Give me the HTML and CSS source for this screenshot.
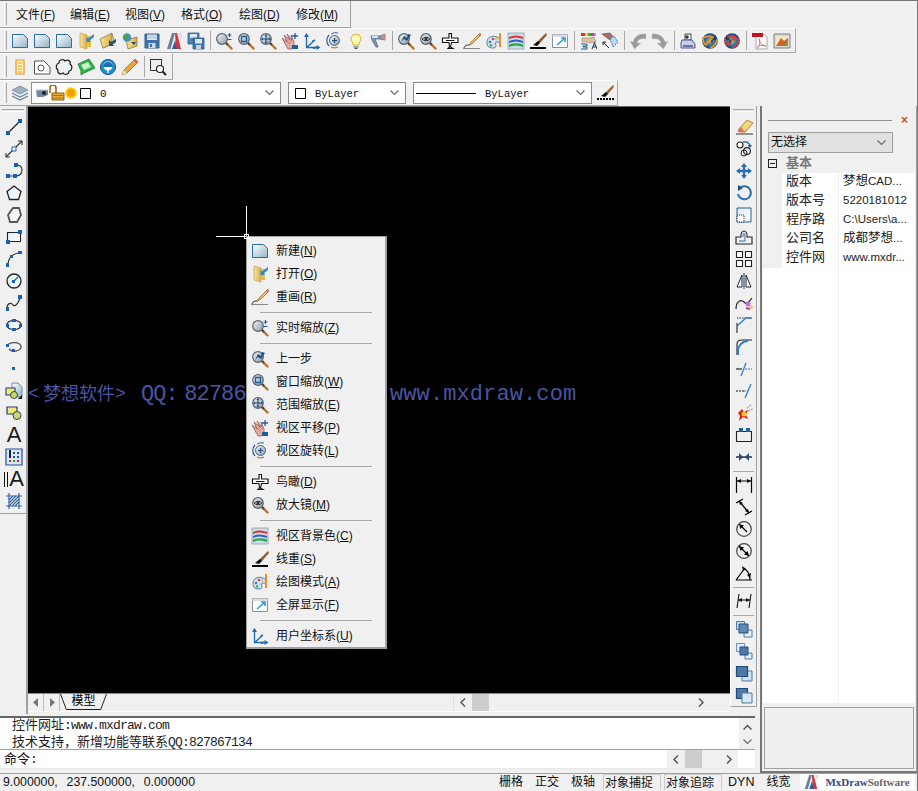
FILE: index.html
```html
<!DOCTYPE html>
<html lang="zh">
<head>
<meta charset="utf-8">
<title>MxDraw</title>
<link rel="stylesheet" href="styles.css">
</head>
<body>
<svg class="sprite" width="0" height="0" aria-hidden="true">
<defs>
<linearGradient id="gp" x1="0" y1="0" x2="1" y2="1"><stop offset="0" stop-color="#fff"/><stop offset="1" stop-color="#8fb4c8"/></linearGradient>
<linearGradient id="gl" x1="0" y1="0" x2="1" y2="1"><stop offset="0" stop-color="#f2f6f8"/><stop offset="1" stop-color="#8d9aa8"/></linearGradient>
<linearGradient id="gb" x1="0" y1="0" x2="1" y2="1"><stop offset="0" stop-color="#dfeaf4"/><stop offset="1" stop-color="#fff"/></linearGradient>
<linearGradient id="gf" x1="0" y1="0" x2="1" y2="0"><stop offset="0" stop-color="#f7e6a0"/><stop offset="1" stop-color="#d9ae48"/></linearGradient>
<radialGradient id="gg"><stop offset="0" stop-color="#f0b030"/><stop offset=".55" stop-color="#2a78b8"/><stop offset="1" stop-color="#143f70"/></radialGradient>

<symbol id="new" viewBox="-1 -1 18 18"><path d="M.5 1.5H11.5L15.5 5.5V14.5H.5Z" fill="url(#gp)" stroke="#2c6ca6"/></symbol>
<symbol id="open" viewBox="-1 -1 18 18"><path d="M2 0L9 2V16L2 14Z" fill="url(#gf)" stroke="#c9a040" stroke-width=".7"/><path d="M9 3H13V14H9Z" fill="#e3bd55"/><path d="M16 1L10 5.5 8.5 4V9H13L11.5 7.5 16 4Z" fill="#2b87d6"/></symbol>
<symbol id="open2" viewBox="-1 -1 18 18"><path d="M0 6L12 0V11L3 15Z" fill="url(#gf)" stroke="#8d7a3c" stroke-width=".8"/><path d="M3 15L15 10 12 1" fill="none" stroke="#a8904a"/><path d="M16 6L11 9 9 7V13H14L12.5 11 16 9Z" fill="#24506f"/></symbol>
<symbol id="openw" viewBox="-1 -1 18 18"><path d="M4 7L15 4V13L6 16Z" fill="url(#gf)" stroke="#8d7a3c" stroke-width=".8"/><circle cx="5" cy="4.5" r="4.2" fill="#3f8fd0"/><path d="M2 2L6 1 7 4 4 7 2 5ZM7 5L9 6 7 8Z" fill="#57a04a"/><path d="M9 9H14L12 12Z" fill="#24506f"/></symbol>
<symbol id="save" viewBox="-1 -1 18 18"><path d="M1 1H15V15H1Z" fill="#3d72aa" stroke="#33608f"/><path d="M3 1.5H13V7H3Z" fill="#dbe7f0"/><path d="M3 3H13M3 5H13" stroke="#9ab" stroke-width=".6"/><path d="M4.5 10H11.5V15H4.5Z" fill="#c8d6e2"/><path d="M6 11H8V14H6Z" fill="#3d72aa"/></symbol>
<symbol id="mx" viewBox="-1 -1 18 18"><path d="M1 16L6 0H9L4.5 16Z" fill="#6f7d96"/><path d="M9 0H11L15 16H10Z" fill="#d8343c"/><path d="M6 16L9 7 11 16Z" fill="#2d5fa8"/><path d="M12 0H16V6Z" fill="#d8dde6"/></symbol>
<symbol id="saveall" viewBox="-1 -1 18 18"><path d="M0 0H11V11H0Z" fill="#4c82b6" stroke="#33608f" stroke-width=".8"/><path d="M2 1H9V5H2Z" fill="#dbe7f0"/><path d="M5 5H16V16H5Z" fill="#3d72aa" stroke="#33608f" stroke-width=".8"/><path d="M7 6H14V10.500H7Z" fill="#dbe7f0"/><path d="M8 12H13V16H8Z" fill="#c8d6e2"/></symbol>

<symbol id="lens" viewBox="-1 -1 18 18"><circle cx="6" cy="6" r="5.300" fill="url(#gl)" stroke="#56636f" stroke-width="1.200"/><path d="M10 10L15.500 15.500" stroke="#b07433" stroke-width="2.400" stroke-linecap="round"/><path d="M10 10L12 12" stroke="#444" stroke-width="2"/></symbol>
<symbol id="zrt" viewBox="-1 -1 18 18"><use href="#lens" x="-1" y="-1" width="18" height="18"/><path d="M13.500 0V4M11.500 2H15.500M11.500 6.500H15.500" stroke="#1f5d99" stroke-width="1.100" fill="none"/></symbol>
<symbol id="zwin" viewBox="-1 -1 18 18"><use href="#lens" x="-1" y="-1" width="18" height="18"/><path d="M3.500 3.500H8.500V8.500H3.500Z" fill="none" stroke="#1f5d99" stroke-width="1.300"/></symbol>
<symbol id="zext" viewBox="-1 -1 18 18"><use href="#lens" x="-1" y="-1" width="18" height="18"/><path d="M6 2V10M2 6H10" stroke="#1f4f80" stroke-width="1.100"/><path d="M6 1L7.500 3H4.500ZM6 11L7.500 9H4.500ZM1 6L3 4.500V7.500ZM11 6L9 4.500V7.500Z" fill="#1f4f80"/></symbol>
<symbol id="pan" viewBox="-1 -1 18 18"><path d="M0 5L5 9 2 2 8 7 5 1 10 7 9 2 12 9V13L10 16H6Z" fill="#e6a9a0" stroke="#8f5a5a" stroke-width=".8"/><path d="M3 6L8 11M5 4L10 9" stroke="#a86868" stroke-width=".7"/><path d="M10 12H16V16H10Z" fill="#1f5d99"/><path d="M13 0V6M10 3H16" stroke="#1f5d99" stroke-width="1.300"/></symbol>
<symbol id="ucs" viewBox="-1 -1 18 18"><path d="M2.500 1V14.500H15M2.500 14.500L11 7" fill="none" stroke="#2469ac" stroke-width="1.300"/><path d="M2.500 0L5 4H0ZM16.500 14.500L12.500 17V12Z" fill="#2469ac"/><path d="M9 15.500H11V13.500M11 7L8 8" stroke="#2469ac" fill="none"/></symbol>
<symbol id="orbit" viewBox="-1 -1 18 18"><circle cx="8.500" cy="7.500" r="5" fill="url(#gl)" stroke="#56636f"/><path d="M8.500 5V10M6 7.500H11" stroke="#1f4f80" stroke-width="1.200"/><path d="M3 2A8 8 0 0 0 3 13" fill="none" stroke="#2469ac" stroke-width="1.300"/><path d="M5 14A8 8 0 0 0 12 14" fill="none" stroke="#b5843f" stroke-width="1.300"/><path d="M5 1A8 8 0 0 1 12 0" fill="none" stroke="#2469ac"/></symbol>
<symbol id="bulb" viewBox="-1 -1 18 18"><path d="M8 1A5 5 0 0 1 11 10V12H5V10A5 5 0 0 1 8 1Z" fill="#fff8b8" stroke="#d8b020"/><path d="M5.500 13H10.500V15H5.500Z" fill="#9aa4b0"/><path d="M6.500 15.500H9.500" stroke="#556"/></symbol>
<symbol id="dryer" viewBox="-1 -1 18 18"><path d="M1 3H10L15 1V7L10 6H5L8 14H6L2 7Z" fill="#7f96b4" stroke="#4f647f" stroke-width=".8"/><path d="M2 3H8V5H2Z" fill="#d8e2ee"/><path d="M12 2L15 1V7L12 6Z" fill="#c78f86"/></symbol>
<symbol id="zprev" viewBox="-1 -1 18 18"><use href="#lens" x="-1" y="-1" width="18" height="18"/><path d="M3 9L6 3 9 5 10 1 13 2 9 8 6 6Z" fill="#1f4f80"/></symbol>
<symbol id="zeye" viewBox="-1 -1 18 18"><use href="#lens" x="-1" y="-1" width="18" height="18"/><path d="M2 6Q6 2.500 10 6Q6 9.500 2 6Z" fill="#fff" stroke="#333"/><circle cx="6" cy="6" r="1.700" fill="#333"/></symbol>
<symbol id="plane" viewBox="-1 -1 18 18"><path d="M7 .5H9.500V5H16V9.500H9.500L8.500 14 11 15.500H6L7.500 14 7 9.500H.5V5H7Z" fill="#fff" stroke="#111" stroke-width="1.100"/><path d="M4 7.500H12.500" stroke="#111"/></symbol>
<symbol id="redraw" viewBox="-1 -1 18 18"><path d="M16 0L7 9 5.500 12 8.500 10.500 17 2Z" fill="#e8c070" stroke="#aa6c25" stroke-width=".8"/><path d="M14 1L16 3" stroke="#c44"/><path d="M5.500 12C3 12 0 12 0 16" fill="none" stroke="#222"/><path d="M1 15.500H16" stroke="#888"/></symbol>
<symbol id="palette" viewBox="-1 -1 18 18"><path d="M1 9C1 4 7 2 11 4 16 6 14 10 11 9 9 9 9 11 10 12 11 15 6 16 3 14 1 13 1 11 1 9Z" fill="#cfe0ee" stroke="#5a7fa8"/><circle cx="4" cy="9" r="1.300" fill="#3a7fc8"/><circle cx="7" cy="6" r="1.300" fill="#e04848"/><circle cx="5" cy="12.500" r="1.300" fill="#4fa850"/><circle cx="10" cy="6" r="1.200" fill="#e8c040"/><path d="M14 0V14" stroke="#e89028" stroke-width="2"/></symbol>
<symbol id="bgc" viewBox="-1 -1 18 18"><path d="M0 0H16V16H0Z" fill="#cfdbe6" stroke="#8fa0b0" stroke-width=".8"/><path d="M1 4Q8 1 15 4V6Q8 3 1 6Z" fill="#d8342c"/><path d="M1 8Q8 5 15 8V10Q8 7 1 10Z" fill="#2c60c8"/><path d="M1 11.500Q8 9 15 11.500V14Q8 11 1 14Z" fill="#2ea84a"/></symbol>
<symbol id="lw" viewBox="-1 -1 18 18"><path d="M16 0L8 8 5 12 10 10 17 2Z" fill="#8a5a30"/><path d="M3 12L8 8 10 10 7 13Z" fill="#111"/><path d="M0 14H16V16H0Z" fill="#000"/></symbol>
<symbol id="full" viewBox="-1 -1 18 18"><path d="M.5 1.500H15.500V14.500H.5Z" fill="#fff" stroke="#8a9097"/><path d="M.5 1.500H15.500V4H.5Z" fill="#d8dde2"/><path d="M5 12L13 5M9 5H13V9" fill="none" stroke="#2c9ae0" stroke-width="1.600"/></symbol>
<symbol id="ca" viewBox="-1 -1 18 18"><path d="M1 0H16V3H1Z" fill="#c8c"/><path d="M1 0H5V3H1Z" fill="#e03030"/><path d="M5 0H8V3H5Z" fill="#f0d020"/><path d="M8 0H11V3H8Z" fill="#30b030"/><path d="M11 0H14V3H11Z" fill="#d030c0"/><path d="M2 5H9L14 4 16 9 10 10 7 9H2Z" fill="#d8c890" stroke="#708" stroke-width=".3"/><path d="M12 16L14.500 10 17 16M13 14H16" fill="none" stroke="#345" stroke-width="1.100"/><path d="M1 11H7V13H3V14H7V16H1" fill="none" stroke="#1f5d99"/></symbol>
<symbol id="pick" viewBox="-1 -1 18 18"><path d="M0 1L8 0 12 5 8 7Z" fill="#a86e68" stroke="#6b4a48" stroke-width=".7"/><path d="M8 6L12 3 16 9 11 14Z" fill="#b8d8f0" stroke="#3a7ab8" stroke-dasharray="2 1"/><path d="M1 9L7 15M1 9H4M1 9V12" fill="none" stroke="#222"/></symbol>
<symbol id="undo" viewBox="-1 -1 18 18"><path d="M16 1V6C10 5 8 7 7 10L11 10 4.500 16 0 8 3 9C4 4 9 0 16 1Z" fill="#9a9a9a" stroke="#c8c8c8" stroke-width=".5"/></symbol>
<symbol id="redo" viewBox="-1 -1 18 18"><path d="M0 1V6C6 5 8 7 9 10L5 10 11.500 16 16 8 13 9C12 4 7 0 0 1Z" fill="#9a9a9a" stroke="#c8c8c8" stroke-width=".5"/></symbol>
<symbol id="print" viewBox="-1 -1 18 18"><path d="M5 1H11V7H5Z" fill="#fff" stroke="#444"/><path d="M2 7H12L15 11V15H1V10Z" fill="#c9cde6" stroke="#4f5690"/><path d="M3 13H13" stroke="#4f5690" stroke-width="1.500"/><circle cx="7" cy="4" r="1.800" fill="#333"/></symbol>
<symbol id="globe1" viewBox="-1 -1 18 18"><circle cx="8" cy="8" r="7.800" fill="url(#gg)"/><path d="M1 5Q8 1 13 6 7 5 4 12 1 10 1 5ZM8 15Q14 13 15 7" fill="none" stroke="#e89828" stroke-width="1.700"/><path d="M9 8L14 2V7H11L10 11Z" fill="#173e70"/></symbol>
<symbol id="globe2" viewBox="-1 -1 18 18"><circle cx="8" cy="8" r="7.800" fill="url(#gg)"/><path d="M1 5Q8 1 13 6 7 5 4 12 1 10 1 5ZM8 15Q14 13 15 7" fill="none" stroke="#d64038" stroke-width="1.700"/><path d="M7 8L2 2V7H5L6 11Z" fill="#173e70"/></symbol>
<symbol id="pdf" viewBox="-1 -1 18 18"><path d="M4 1H12L15 4V16H4Z" fill="#fff" stroke="#a8a8a8"/><path d="M0 0H11V4H0Z" fill="#c8101c"/><path d="M7 6C8 11 11 13 14 13 10 11 6 13 5 15 7 14 9 8 7 6Z" fill="none" stroke="#ee6a70"/></symbol>
<symbol id="img" viewBox="-1 -1 18 18"><path d="M0 1H16V15H0Z" fill="#d8d8d8" stroke="#808080"/><path d="M2 3H14V13H2Z" fill="#f0e8c8"/><path d="M2 13L7 5 10 8 14 5V13Z" fill="#d86028"/><path d="M9 13L14 7V13Z" fill="#7a9a30"/></symbol>

<symbol id="ruler" viewBox="-1 -1 18 18"><path d="M4 1H12V15H4Z" fill="#fff3c8" stroke="#e89818" stroke-width="1.200"/><path d="M6 4H10M6 7H10M6 10H10M6 13H10" stroke="#e89818"/></symbol>
<symbol id="shape" viewBox="-1 -1 18 18"><path d="M.5 2H10L16 8V15H.5Z" fill="#fff" stroke="#555"/><circle cx="7" cy="9" r="3" fill="none" stroke="#555"/></symbol>
<symbol id="cloud" viewBox="-1 -1 18 18"><path d="M3 4C3 0 8 0 9 2 12 0 15 2 14 5 17 7 16 12 13 12 13 16 8 16 7 14 4 16 1 14 2 11 -1 9 0 5 3 4Z" fill="#eef1f4" stroke="#222" stroke-width="1.200"/></symbol>
<symbol id="bubble" viewBox="-1 -1 18 18"><path d="M0 5L11 0 17 9 6 14 3 16 3 12Z" fill="#2fb24a" stroke="#1f7a34" stroke-width=".8"/><path d="M3 6L10 3 13 8 6 11Z" fill="#c8f0c8"/></symbol>
<symbol id="bluec" viewBox="-1 -1 18 18"><circle cx="8" cy="8" r="7.600" fill="#1d8fd0" stroke="#1d5f90"/><circle cx="8" cy="7" r="4.600" fill="#e8f2fa"/><path d="M3 8A5 5 0 0 1 13 8Z" fill="#1d6fb0"/><path d="M8 8V14" stroke="#fff" stroke-width="1.400"/></symbol>
<symbol id="pencil" viewBox="-1 -1 18 18"><path d="M13 0L16 3 5 14 0 16 2 11Z" fill="#eaa63a" stroke="#8c6a2c" stroke-width=".8"/><path d="M13 0L16 3 14.500 4.500 11.500 1.500Z" fill="#d86a5a"/><path d="M2 11L5 14 0 16Z" fill="#ecdcc0"/></symbol>
<symbol id="zsel" viewBox="-1 -1 18 18"><path d="M.5 .5H11.500V11.500H.5Z" fill="none" stroke="#333"/><path d="M.5 9V.5H11.500V4" fill="none" stroke="#333"/><circle cx="10" cy="10" r="3.500" fill="#fff" stroke="#222" stroke-width="1.200"/><path d="M12.500 12.500L16 16" stroke="#222" stroke-width="2"/></symbol>

<symbol id="layers" viewBox="-1 -1 18 18"><path d="M8 1L16 5 8 9 0 5Z" fill="#9fb0c0" stroke="#6a7f93" stroke-width=".7"/><path d="M0 8L8 12 16 8M0 11L8 15 16 11" fill="none" stroke="#6a7f93" stroke-width="1.300"/></symbol>
<symbol id="eye" viewBox="0 0 12 8"><path d="M0 1H12V6L7 8H1Z" fill="#6f87a0"/><circle cx="8" cy="4" r="2" fill="#222"/><path d="M0 1H12" stroke="#b8c8d8"/></symbol>
<symbol id="lock" viewBox="0 0 16 16"><path d="M1 8V3A3 3 0 0 1 7 3V8" fill="none" stroke="#a06a10" stroke-width="1.600"/><path d="M3 8H15V15H3Z" fill="#e8b038" stroke="#8c5c10"/><path d="M3 10.500H15M3 13H15" stroke="#a87818"/></symbol>
<symbol id="sun" viewBox="0 0 12 12"><circle cx="6" cy="6" r="5.800" fill="#ffc808"/><circle cx="6" cy="6" r="3.800" fill="#f0a000"/></symbol>
<symbol id="square" viewBox="0 0 11 11"><path d="M.5 .5H10.500V10.500H.5Z" fill="#fff" stroke="#000"/></symbol>
<symbol id="brushsm" viewBox="-1 -1 18 18"><path d="M16 0L9 7 6 11 11 9 17 2Z" fill="#9a6a38"/><path d="M4 11L9 7 11 9 8 12Z" fill="#111"/><path d="M0 14H17" stroke="#000" stroke-width="2" stroke-dasharray="2 1"/></symbol>
<symbol id="dn" viewBox="0 0 9 6"><path d="M.5 .5L4.500 4.500 8.500 .5" fill="none" stroke="#666" stroke-width="1.100"/></symbol>
<symbol id="up" viewBox="0 0 9 6"><path d="M.5 5.500L4.500 1.500 8.500 5.500" fill="none" stroke="#555" stroke-width="1.500"/></symbol>
<symbol id="lf" viewBox="0 0 6 9"><path d="M5 .5L1 4.500 5 8.500" fill="none" stroke="#555" stroke-width="1.500"/></symbol>
<symbol id="rt" viewBox="0 0 6 9"><path d="M1 .5L5 4.500 1 8.500" fill="none" stroke="#555" stroke-width="1.500"/></symbol>
<symbol id="tl" viewBox="0 0 6 9"><path d="M5 0V9L0 4.500Z" fill="#777"/></symbol>
<symbol id="tr" viewBox="0 0 6 9"><path d="M1 0V9L6 4.500Z" fill="#777"/></symbol>
<symbol id="sl" viewBox="0 0 7 16"><path d="M.5 0L6.500 16" stroke="#222" fill="none"/></symbol>
<symbol id="sr" viewBox="0 0 7 16"><path d="M6.500 0L.5 16" stroke="#222" fill="none"/></symbol>

<symbol id="d-line" viewBox="-1 -1 18 18"><path d="M2 14L14 2" stroke="#222" stroke-width="1.200"/><path d="M0 12H4V16H0ZM12 0H16V4H12Z" fill="#1660b8"/></symbol>
<symbol id="d-xline" viewBox="-1 -1 18 18"><path d="M0 16L16 0" stroke="#333" stroke-width="1.100"/><path d="M0 16V12M0 16H4M16 0V4M16 0H12" fill="none" stroke="#333" stroke-width="1.100"/><path d="M6 8H10V12H6Z" transform="translate(0 -2)" fill="#fff" stroke="#1660b8"/></symbol>
<symbol id="d-pl" viewBox="-1 -1 18 18"><path d="M2 13H9C13 13 16 11 16 7S13 2 10 2" fill="none" stroke="#333" stroke-width="1.100"/><path d="M0 11H4V15H0ZM7 11H11V15H7ZM8 0H12V4H8Z" fill="#1660b8"/></symbol>
<symbol id="d-poly" viewBox="-1 -1 18 18"><path d="M8 1L15 6.500 12.500 14.500H3.500L1 6.500Z" fill="url(#gb)" stroke="#222" stroke-width="1.300"/></symbol>
<symbol id="d-poly2" viewBox="-1 -1 18 18"><path d="M7 1H13L15 8 11 15H4L2 8Z" fill="url(#gb)" stroke="#555" stroke-width="1.800"/></symbol>
<symbol id="d-rect" viewBox="-1 -1 18 18"><path d="M1.500 3.500H14.500V12.500H1.500Z" fill="url(#gb)" stroke="#222" stroke-width="1.100"/><path d="M0 11H4V15H0ZM12 1H16V5H12Z" fill="#1660b8"/></symbol>
<symbol id="d-arc" viewBox="-1 -1 18 18"><path d="M2 14C2 7 7 2 14 2" fill="none" stroke="#333" stroke-width="1.200"/><path d="M0 12H3V16H0ZM12 0H16V3H12ZM4 4H7V7H4Z" fill="#1660b8"/></symbol>
<symbol id="d-circle" viewBox="-1 -1 18 18"><circle cx="8" cy="8" r="7" fill="url(#gb)" stroke="#222" stroke-width="1.300"/><path d="M8 8L12 4" stroke="#1660b8" stroke-width="1.300"/><path d="M6 7H9V10H6Z" fill="#1660b8"/></symbol>
<symbol id="d-spl" viewBox="-1 -1 18 18"><path d="M1 14C1 8 5 7 7 10 9 12 12 9 14 3" fill="none" stroke="#333" stroke-width="1.200"/><path d="M0 12H3V16H0ZM12 0H16V4H12Z" fill="#1660b8"/></symbol>
<symbol id="d-ell" viewBox="-1 -1 18 18"><ellipse cx="8" cy="8" rx="7.300" ry="4.500" fill="url(#gb)" stroke="#222" stroke-width="1.200"/><path d="M6 2H10V5H6ZM6 11H10V14H6Z" fill="#1660b8"/><path d="M0 7H3V10H0ZM13 7H16V10H13Z" fill="#1660b8"/></symbol>
<symbol id="d-ella" viewBox="-1 -1 18 18"><path d="M1 7C3 3 13 2 15 7 16 12 6 14 3 10" fill="url(#gb)" stroke="#555" stroke-width="1.400"/><path d="M0 5H3V8H0ZM6 10H9V13H6Z" fill="#1660b8"/></symbol>
<symbol id="d-pt" viewBox="-1 -1 18 18"><path d="M6 6H9V9H6Z" fill="#1660b8"/></symbol>
<symbol id="d-ins" viewBox="-1 -1 18 18"><path d="M6 0H12L16 4V14H6Z" fill="url(#gp)" stroke="#6a8aa8"/><path d="M0 5H9V12H0Z" fill="#f4e87a" stroke="#1f3f70" stroke-width="1.100"/><circle cx="8" cy="12" r="3.500" fill="#c8d870" stroke="#444"/><path d="M12 16L16 12V16Z" fill="#111"/></symbol>
<symbol id="d-blk" viewBox="-1 -1 18 18"><path d="M1 2H11V9H1Z" fill="#f4e87a" stroke="#1f3f70" stroke-width="1.200"/><circle cx="11" cy="10.500" r="4" fill="#c8d870" stroke="#444"/></symbol>
<symbol id="d-table" viewBox="-1 -1 18 18"><path d="M0 0H16V16H0Z" fill="#dce6f4" stroke="#24509a" stroke-width="1.200"/><path d="M4 1V9" stroke="#222" stroke-width="2"/><path d="M7 3H9V5H7ZM11 3H13V5H11ZM7 7H9V9H7ZM11 7H13V9H11Z" fill="#1b4e9e"/><path d="M3 11H5V13H3Z" fill="#d02020"/><path d="M7 11H9V13H7Z" fill="#20a020"/><path d="M11 11H13V13H11Z" fill="#d02020"/></symbol>
<symbol id="d-hatch" viewBox="-1 -1 18 18"><path d="M3 3H13V13H3Z" fill="#fff"/><path d="M3 7L7 3M3 10L10 3M3 13L13 3M6 13L13 6M9 13L13 9" stroke="#3a5f8f" stroke-width="1.100"/><path d="M0 3H16M0 13H16M3 0V16M13 0V16" stroke="#2e6aa8" stroke-width="1.200"/></symbol>

<symbol id="m-erase" viewBox="-1 -1 18 18"><path d="M11 1L17 4 9 13H3L2 11Z" fill="#f0d880" stroke="#a86a20" stroke-width=".8"/><path d="M2 11L5 8 9 13H3Z" fill="#e87060"/><path d="M0 15H17" stroke="#333"/></symbol>
<symbol id="m-copy" viewBox="-1 -1 18 18"><circle cx="4" cy="4" r="3" fill="#fff" stroke="#222" stroke-width="1.100"/><circle cx="11" cy="10" r="3.400" fill="#dfe8f2" stroke="#222" stroke-width="1.100"/><circle cx="8" cy="12" r="3" fill="none" stroke="#222"/><path d="M7 1Q13 0 14 5" fill="none" stroke="#1f5d99" stroke-width="1.400"/><path d="M11.500 4H16L14 7Z" fill="#1f5d99"/></symbol>
<symbol id="m-move" viewBox="-1 -1 18 18"><path d="M8 2V14M2 8H14" stroke="#2b6fb0" stroke-width="2.400"/><path d="M8 0L11 4H5ZM8 16L11 12H5ZM0 8L4 5V11ZM16 8L12 5V11Z" fill="#2b6fb0"/></symbol>
<symbol id="m-rot" viewBox="-1 -1 18 18"><path d="M4 3A6.500 6.500 0 1 1 2 9" fill="none" stroke="#2b6fb0" stroke-width="2"/><path d="M2 0L7 3 2 6Z" fill="#1f4f80"/></symbol>
<symbol id="m-scale" viewBox="-1 -1 18 18"><path d="M1 1H15V15H1Z" fill="url(#gb)" stroke="#2a5f96"/><path d="M1 8H8V15H1Z" fill="#fff" stroke="#222" stroke-dasharray="1 1"/></symbol>
<symbol id="m-offset" viewBox="-1 -1 18 18"><path d="M5 8C4 0 12 0 11 8H16V15H0V8Z" fill="none" stroke="#222" stroke-width="1.100"/><path d="M7 8C7 3 9 3 9 8V12H3" fill="none" stroke="#2b6fb0"/></symbol>
<symbol id="m-array" viewBox="-1 -1 18 18"><path d="M.5 .5H6.500V6.500H.5ZM9.500 .5H15.500V6.500H9.500ZM.5 9.500H6.500V15.500H.5ZM9.500 9.500H15.500V15.500H9.500Z" fill="#fff" stroke="#222" stroke-width="1.100"/></symbol>
<symbol id="m-mirror" viewBox="-1 -1 18 18"><path d="M8 0V16" stroke="#2b6fb0" stroke-width="1.300"/><path d="M6 2L1 14H6ZM10 2L15 14H10Z" fill="#fff" stroke="#222"/></symbol>
<symbol id="m-curve" viewBox="-1 -1 18 18"><path d="M0 14C0 6 5 4 8 7S12 8 16 3" fill="none" stroke="#222" stroke-width="1.200"/><circle cx="12" cy="9" r="2.500" fill="#c070e0"/><circle cx="15" cy="12" r="2" fill="#f0d060"/><path d="M10 13L14 14" stroke="#b040c0" stroke-width="2"/></symbol>
<symbol id="m-chamf" viewBox="-1 -1 18 18"><path d="M1 16V6" stroke="#222" stroke-width="1.100"/><path d="M1 1H16" stroke="#222" stroke-dasharray="1.500 1"/><path d="M1 9L10 1H16" fill="none" stroke="#2b7fd0" stroke-width="1.400"/></symbol>
<symbol id="m-fill" viewBox="-1 -1 18 18"><path d="M1 16V5C1 2 3 1 6 1H16" fill="none" stroke="#222" stroke-width="1.100"/><path d="M2 16V12C2 7 6 2 12 2" fill="none" stroke="#2b7fd0" stroke-width="2"/></symbol>
<symbol id="m-trim" viewBox="-1 -1 18 18"><path d="M0 8H6" stroke="#111" stroke-width="1.100"/><path d="M9 8H16" stroke="#2b7fd0" stroke-dasharray="2 1"/><path d="M5 15L10 2" stroke="#2b7fd0" stroke-width="1.300"/></symbol>
<symbol id="m-ext" viewBox="-1 -1 18 18"><path d="M0 8H8" stroke="#111" stroke-dasharray="2 1"/><path d="M8 8H12" stroke="#2b7fd0" stroke-dasharray="2 1"/><path d="M9 15L15 1" stroke="#2b7fd0" stroke-width="1.300"/></symbol>
<symbol id="m-expl" viewBox="-1 -1 18 18"><path d="M2 8L6 4 8 7 12 5 10 10 12 14 7 12 3 16 4 11Z" fill="#e02020"/><circle cx="8" cy="9" r="2.500" fill="#f0d020"/><path d="M11 3L15 0M12 6L17 4" stroke="#aaa" stroke-width="1.500" stroke-dasharray="2 1"/></symbol>
<symbol id="m-str" viewBox="-1 -1 18 18"><path d="M.5 4.500H15.500V14.500H.5Z" fill="none" stroke="#222" stroke-width="1.100"/><path d="M3 1H7V5H3ZM10 1H14V5H10Z" fill="#1660b8"/></symbol>
<symbol id="m-join" viewBox="-1 -1 18 18"><path d="M0 8H16" stroke="#222" stroke-width="1.400"/><path d="M7 8L3 4V12ZM9 8L13 4V12Z" fill="#1f4f80"/></symbol>
<symbol id="dm-lin" viewBox="-1 -1 18 18"><path d="M.5 0V16M15.500 0V16M1 4H15" stroke="#000" stroke-width="1.200"/><path d="M1 4L5 2V6ZM15 4L11 2V6Z" fill="#000"/></symbol>
<symbol id="dm-ali" viewBox="-1 -1 18 18"><path d="M0 4L7 0M9 16L16 12M3 2L13 14" stroke="#000" stroke-width="1.300" fill="none"/><path d="M3 2L7 4 4 6ZM13 14L9 12 12 10Z" fill="#000"/></symbol>
<symbol id="dm-rad" viewBox="-1 -1 18 18"><circle cx="8" cy="8" r="7.300" fill="none" stroke="#444" stroke-width="1.200"/><path d="M11 11L4 4" stroke="#000" stroke-width="1.300"/><path d="M3 3L8 4.500 4.500 8Z" fill="#000"/></symbol>
<symbol id="dm-dia" viewBox="-1 -1 18 18"><circle cx="8" cy="8" r="7.300" fill="none" stroke="#444" stroke-width="1.200"/><path d="M3 3L13 13" stroke="#000" stroke-width="1.300"/><path d="M3 3L8 4.500 4.500 8ZM13 13L8 11.500 11.500 8Z" fill="#000"/></symbol>
<symbol id="dm-ang" viewBox="-1 -1 18 18"><path d="M0 15H16M0 15L9 3" stroke="#000" stroke-width="1.200"/><path d="M9 4Q14 8 14 15" fill="none" stroke="#000" stroke-width="1.200"/><path d="M6 1L10 4 7 6ZM14 13L15 8 11 10Z" fill="#000"/></symbol>
<symbol id="dm-bl" viewBox="-1 -1 18 18"><path d="M3 1L1 15M15 1L13 15M2 7H14" stroke="#111" stroke-width="1.100"/><path d="M2 7L6 5V9ZM14 7L10 5V9Z" fill="#111"/></symbol>
<symbol id="o-1" viewBox="-1 -1 18 18"><path d="M.5 .5H8.500V8.500H.5Z" fill="#cfdcea" stroke="#4f7aa6"/><path d="M10 9H16V16H8V10Z" fill="#e8f0f8" stroke="#4f7aa6"/><path d="M3 3H12V12H3Z" fill="#5f8ab8" stroke="#264f80"/></symbol>
<symbol id="o-2" viewBox="-1 -1 18 18"><path d="M.5 .5H8.500V8.500H.5Z" fill="#e0e8f2" stroke="#6f90b4"/><path d="M9 10H16V16H9Z" fill="#dfeaf4" stroke="#4f7aa6"/><path d="M4 4H12V12H4Z" fill="#4c78a8" stroke="#264f80"/></symbol>
<symbol id="o-3" viewBox="-1 -1 18 18"><path d="M6 6H16V16H6Z" fill="#cfe0ee" stroke="#4f7aa6"/><path d="M.5 1.500H11.500V11.500H.5Z" fill="#4c78a8" stroke="#1f4a7a" stroke-width="1.200"/></symbol>
<symbol id="o-4" viewBox="-1 -1 18 18"><path d="M.5 1.500H11.500V11.500H.5Z" fill="#4c78a8" stroke="#1f4a7a" stroke-width="1.200"/><path d="M6 6H16V16H6Z" fill="#d8e6f2" stroke="#4f7aa6"/></symbol>
</defs>
</svg>

<header class="menubar">
  <span class="grip"></span>
  <span class="mi">文件(<u>F</u>)</span><span class="mi">编辑(<u>E</u>)</span><span class="mi">视图(<u>V</u>)</span><span class="mi">格式(<u>O</u>)</span><span class="mi">绘图(<u>D</u>)</span><span class="mi">修改(<u>M</u>)</span>
</header>

<div class="tb tb1">
  <span class="grip"></span>
  <span class="b"><svg class="ic"><use href="#new"/></svg></span><span class="b"><svg class="ic"><use href="#new"/></svg></span><span class="b"><svg class="ic"><use href="#new"/></svg></span><span class="b"><svg class="ic"><use href="#open"/></svg></span><span class="b"><svg class="ic"><use href="#open2"/></svg></span><span class="b"><svg class="ic"><use href="#openw"/></svg></span><span class="b"><svg class="ic"><use href="#save"/></svg></span><span class="b"><svg class="ic"><use href="#mx"/></svg></span><span class="b"><svg class="ic"><use href="#saveall"/></svg></span>
  <span class="sep"></span>
  <span class="b"><svg class="ic"><use href="#zrt"/></svg></span><span class="b"><svg class="ic"><use href="#zwin"/></svg></span><span class="b"><svg class="ic"><use href="#zext"/></svg></span><span class="b"><svg class="ic"><use href="#pan"/></svg></span><span class="b"><svg class="ic"><use href="#ucs"/></svg></span><span class="b"><svg class="ic"><use href="#orbit"/></svg></span><span class="b"><svg class="ic"><use href="#bulb"/></svg></span><span class="b"><svg class="ic"><use href="#dryer"/></svg></span>
  <span class="sep"></span>
  <span class="b"><svg class="ic"><use href="#zprev"/></svg></span><span class="b"><svg class="ic"><use href="#zeye"/></svg></span><span class="b"><svg class="ic"><use href="#plane"/></svg></span><span class="b"><svg class="ic"><use href="#redraw"/></svg></span><span class="b"><svg class="ic"><use href="#palette"/></svg></span><span class="b"><svg class="ic"><use href="#bgc"/></svg></span><span class="b"><svg class="ic"><use href="#lw"/></svg></span><span class="b"><svg class="ic"><use href="#full"/></svg></span>
  <span class="sep"></span>
  <span class="b"><svg class="ic"><use href="#ca"/></svg></span><span class="b"><svg class="ic"><use href="#pick"/></svg></span>
  <span class="sep"></span>
  <span class="b"><svg class="ic"><use href="#undo"/></svg></span><span class="b"><svg class="ic"><use href="#redo"/></svg></span>
  <span class="sep"></span>
  <span class="b"><svg class="ic"><use href="#print"/></svg></span><span class="b"><svg class="ic"><use href="#globe1"/></svg></span><span class="b"><svg class="ic"><use href="#globe2"/></svg></span>
  <span class="sep"></span>
  <span class="b"><svg class="ic"><use href="#pdf"/></svg></span><span class="b"><svg class="ic"><use href="#img"/></svg></span>
</div>

<div class="tb tb2">
  <span class="grip"></span>
  <span class="b"><svg class="ic"><use href="#ruler"/></svg></span><span class="b"><svg class="ic"><use href="#shape"/></svg></span><span class="b"><svg class="ic"><use href="#cloud"/></svg></span><span class="b"><svg class="ic"><use href="#bubble"/></svg></span><span class="b"><svg class="ic"><use href="#bluec"/></svg></span><span class="b"><svg class="ic"><use href="#pencil"/></svg></span>
  <span class="sep"></span>
  <span class="b"><svg class="ic"><use href="#zsel"/></svg></span>
</div>

<div class="tb tb3">
  <span class="grip"></span>
  <span class="layerb"><svg class="ic"><use href="#layers"/></svg></span>
  <span class="combo c1">
    <svg class="eye"><use href="#eye"/></svg><svg class="lock"><use href="#lock"/></svg><svg class="sun"><use href="#sun"/></svg><svg class="sq"><use href="#square"/></svg>
    <span class="ctext zero">0</span>
    <svg class="dn"><use href="#dn"/></svg>
  </span>
  <span class="combo c2">
    <svg class="sq"><use href="#square"/></svg>
    <span class="ctext bl1">ByLayer</span>
    <svg class="dn"><use href="#dn"/></svg>
  </span>
  <span class="combo c3">
    <span class="ltype"></span>
    <span class="ctext bl2">ByLayer</span>
    <svg class="dn"><use href="#dn"/></svg>
  </span>
  <span class="brushb"><svg class="ic"><use href="#brushsm"/></svg></span>
</div>

<div class="work">
  <div class="leftside">
    <div class="mid">
      <div class="vwrap lwrap">
      <nav class="vtb ltb">
        <span class="hgrip"></span>
        <span class="vb"><svg class="ic"><use href="#d-line"/></svg></span>
        <span class="vb"><svg class="ic"><use href="#d-xline"/></svg></span>
        <span class="vb"><svg class="ic"><use href="#d-pl"/></svg></span>
        <span class="vb"><svg class="ic"><use href="#d-poly"/></svg></span>
        <span class="vb"><svg class="ic"><use href="#d-poly2"/></svg></span>
        <span class="vb"><svg class="ic"><use href="#d-rect"/></svg></span>
        <span class="vb"><svg class="ic"><use href="#d-arc"/></svg></span>
        <span class="vb"><svg class="ic"><use href="#d-circle"/></svg></span>
        <span class="vb"><svg class="ic"><use href="#d-spl"/></svg></span>
        <span class="vb"><svg class="ic"><use href="#d-ell"/></svg></span>
        <span class="vb"><svg class="ic"><use href="#d-ella"/></svg></span>
        <span class="vb"><svg class="ic"><use href="#d-pt"/></svg></span>
        <span class="vb"><svg class="ic"><use href="#d-ins"/></svg></span>
        <span class="vb"><svg class="ic"><use href="#d-blk"/></svg></span>
        <span class="vb bigA">A</span>
        <span class="vb"><svg class="ic"><use href="#d-table"/></svg></span>
        <span class="vb bigA"><span class="bars"></span>A</span>
        <span class="vb"><svg class="ic"><use href="#d-hatch"/></svg></span>
      </nav>
      </div>

      <div class="canvascol">
        <div class="canvas">
          <div class="wm"><span class="wa wa1">&lt;</span><span class="wc">梦想软件</span><span class="wa wa2">&gt;</span><span class="wq">QQ: 82786</span><span class="wu">www.mxdraw.com</span></div>
          <div class="ctx">
            <div class="ci"><svg class="ic"><use href="#new"/></svg><span>新建(<u>N</u>)</span></div>
            <div class="ci"><svg class="ic"><use href="#open"/></svg><span>打开(<u>O</u>)</span></div>
            <div class="ci"><svg class="ic"><use href="#redraw"/></svg><span>重画(<u>R</u>)</span></div>
            <div class="cs"></div>
            <div class="ci"><svg class="ic"><use href="#zrt"/></svg><span>实时缩放(<u>Z</u>)</span></div>
            <div class="cs"></div>
            <div class="ci"><svg class="ic"><use href="#zprev"/></svg><span>上一步</span></div>
            <div class="ci"><svg class="ic"><use href="#zwin"/></svg><span>窗口缩放(<u>W</u>)</span></div>
            <div class="ci"><svg class="ic"><use href="#zext"/></svg><span>范围缩放(<u>E</u>)</span></div>
            <div class="ci"><svg class="ic"><use href="#pan"/></svg><span>视区平移(<u>P</u>)</span></div>
            <div class="ci"><svg class="ic"><use href="#orbit"/></svg><span>视区旋转(<u>L</u>)</span></div>
            <div class="cs"></div>
            <div class="ci"><svg class="ic"><use href="#plane"/></svg><span>鸟瞰(<u>D</u>)</span></div>
            <div class="ci"><svg class="ic"><use href="#zeye"/></svg><span>放大镜(<u>M</u>)</span></div>
            <div class="cs"></div>
            <div class="ci"><svg class="ic"><use href="#bgc"/></svg><span>视区背景色(<u>C</u>)</span></div>
            <div class="ci"><svg class="ic"><use href="#lw"/></svg><span>线重(<u>S</u>)</span></div>
            <div class="ci"><svg class="ic"><use href="#palette"/></svg><span>绘图模式(<u>A</u>)</span></div>
            <div class="ci"><svg class="ic"><use href="#full"/></svg><span>全屏显示(<u>F</u>)</span></div>
            <div class="cs"></div>
            <div class="ci"><svg class="ic"><use href="#ucs"/></svg><span>用户坐标系(<u>U</u>)</span></div>
          </div>
          <span class="chv"></span><span class="chh"></span><span class="chb"></span>
        </div>
        <div class="tabbar">
          <span class="tabbtn"><svg class="tri"><use href="#tl"/></svg></span>
          <span class="tabbtn"><svg class="tri"><use href="#tr"/></svg></span>
          <span class="tab"><svg class="slash"><use href="#sl"/></svg><span class="tabt">模型</span><svg class="slash"><use href="#sr"/></svg></span>
          <span class="hsc">
            <svg class="ch"><use href="#lf"/></svg>
            <span class="thumb"></span>
            <span class="grow"></span>
            <svg class="ch"><use href="#rt"/></svg>
          </span>
        </div>
      </div>

      <nav class="vtb rtb">
        <span class="hgrip"></span>
        <span class="vb"><svg class="ic"><use href="#m-erase"/></svg></span>
        <span class="vb"><svg class="ic"><use href="#m-copy"/></svg></span>
        <span class="vb"><svg class="ic"><use href="#m-move"/></svg></span>
        <span class="vb"><svg class="ic"><use href="#m-rot"/></svg></span>
        <span class="vb"><svg class="ic"><use href="#m-scale"/></svg></span>
        <span class="vb"><svg class="ic"><use href="#m-offset"/></svg></span>
        <span class="vb"><svg class="ic"><use href="#m-array"/></svg></span>
        <span class="vb"><svg class="ic"><use href="#m-mirror"/></svg></span>
        <span class="vb"><svg class="ic"><use href="#m-curve"/></svg></span>
        <span class="vb"><svg class="ic"><use href="#m-chamf"/></svg></span>
        <span class="vb"><svg class="ic"><use href="#m-fill"/></svg></span>
        <span class="vb"><svg class="ic"><use href="#m-trim"/></svg></span>
        <span class="vb"><svg class="ic"><use href="#m-ext"/></svg></span>
        <span class="vb"><svg class="ic"><use href="#m-expl"/></svg></span>
        <span class="vb"><svg class="ic"><use href="#m-str"/></svg></span>
        <span class="vb"><svg class="ic"><use href="#m-join"/></svg></span>
        <span class="vs"></span>
        <span class="vb"><svg class="ic"><use href="#dm-lin"/></svg></span>
        <span class="vb"><svg class="ic"><use href="#dm-ali"/></svg></span>
        <span class="vb"><svg class="ic"><use href="#dm-rad"/></svg></span>
        <span class="vb"><svg class="ic"><use href="#dm-dia"/></svg></span>
        <span class="vb"><svg class="ic"><use href="#dm-ang"/></svg></span>
        <span class="vs"></span>
        <span class="vb"><svg class="ic"><use href="#dm-bl"/></svg></span>
        <span class="vs"></span>
        <span class="vb"><svg class="ic"><use href="#o-1"/></svg></span>
        <span class="vb"><svg class="ic"><use href="#o-2"/></svg></span>
        <span class="vb"><svg class="ic"><use href="#o-3"/></svg></span>
        <span class="vb"><svg class="ic"><use href="#o-4"/></svg></span>
      </nav>
    </div>

    <section class="cmd">
      <div class="log">
        <div class="logtext">
          <div class="ll">控件网址<span class="mono">:www.mxdraw.com</span></div>
          <div class="ll">技术支持，新增功能等联系<span class="mono">QQ:827867134</span></div>
        </div>
        <div class="vsc"><svg class="chv2"><use href="#up"/></svg><svg class="chv2"><use href="#dn"/></svg></div>
      </div>
      <div class="input">
        <span class="prompt">命令<span class="mono">:</span></span>
        <span class="hsc2"><svg class="ch"><use href="#lf"/></svg><span class="thumb2"></span><span class="grow"></span><svg class="ch"><use href="#rt"/></svg></span>
      </div>
    </section>
  </div>

  <aside class="panel">
    <div class="ptitle"><span class="pline"></span><span class="pclose">×</span></div>
    <div class="pselect"><span>无选择</span><svg class="dn"><use href="#dn"/></svg></div>
    <div class="pgroup"><span class="minus"></span><span class="gname">基本</span></div>
    <div class="ptable">
      <div class="pr"><span class="pk">版本</span><span class="pv"><span class="cj">梦想</span>CAD...</span></div>
      <div class="pr"><span class="pk">版本号</span><span class="pv">5220181012</span></div>
      <div class="pr"><span class="pk">程序路</span><span class="pv">C:\Users\a...</span></div>
      <div class="pr"><span class="pk">公司名</span><span class="pv"><span class="cj">成都梦想</span>...</span></div>
      <div class="pr"><span class="pk">控件网</span><span class="pv">www.mxdr...</span></div>
    </div>
    <div class="pempty"><span class="pcol"></span></div>
    <div class="pdesc"></div>
  </aside>
</div>

<footer class="status">
  <span class="coords">9.000000,&nbsp; 237.500000,&nbsp; 0.000000</span>
  <span class="st s1">栅格</span><span class="st s2">正交</span><span class="st s3">极轴</span>
  <span class="st on">对象捕捉</span><span class="st on">对象追踪</span>
  <span class="st s4">DYN</span><span class="st s5">线宽</span>
  <span class="logo"><svg class="lg"><use href="#mx"/></svg><span class="lt"><b class="lb">MxDraw</b><b class="lg2">Software</b></span></span>
</footer>
</body>
</html>
```
FILE: styles.css
```css
* { box-sizing: border-box; }
html, body { margin: 0; padding: 0; }
body {
  width: 918px; height: 791px; overflow: hidden; position: relative;
  background: #f0f0f0; color: #000;
  border-top: 1px solid #777; border-right: 1px solid #777;
  font: 12px/16px "Liberation Sans", "Noto Sans CJK SC", sans-serif;
}
.sprite { position: absolute; }
u { text-decoration: underline; }
.ic { width: 18px; height: 18px; display: block; flex: none; }

.grip { flex: none; width: 3px; margin: 0 2px 0 4px; border-left: 1px solid #fff; border-right: 1px solid #a8a8a8; background: #e4e4e4; }

.menubar { width: 351px; height: 27px; display: flex; align-items: center; border-right: 1px solid #a0a0a0; border-bottom: 1px solid #a0a0a0; padding: 4px 0 2px; }
.menubar .grip { align-self: stretch; margin-right: 9px; margin-top: -2px; }
.mi { width: 54px; flex: none; white-space: nowrap; color: #111; }
.mi:nth-child(3) { width: 55px; }
.mi:nth-child(4) { width: 56px; }
.mi:nth-child(5) { width: 58px; }
.mi:nth-child(6) { width: 57px; }

.tb { display: flex; align-items: center; border-top: 1px solid #fff; border-right: 1px solid #a8a8a8; border-bottom: 1px solid #a8a8a8; padding: 2px 0; }
.tb .grip { align-self: stretch; }
.tb1 { width: 796px; height: 25px; }
.tb2 { width: 173px; height: 27px; }
.tb3 { width: 618px; height: 26px; }
.b { width: 22px; flex: none; display: flex; align-items: center; justify-content: center; }
.sep { flex: none; width: 6px; align-self: stretch; position: relative; display: flex; justify-content: center; }
.sep::before { content: ""; width: 1px; background: #a8a8a8; }

.layerb { width: 22px; flex: none; display: flex; justify-content: center; }
.combo { height: 22px; display: flex; align-items: center; background: #fff; border: 1px solid #8a8a8a; flex: none; position: relative; padding-left: 2px; }
.c1 { width: 250px; }
.c2 { width: 118px; margin-left: 7px; padding-left: 3px; }
.c3 { width: 179px; margin-left: 7px; padding-left: 2px; }
.eye { width: 12px; height: 8px; margin: 0 1px 0 2px; }
.lock { width: 16px; height: 16px; }
.sun { width: 12px; height: 12px; margin-left: 0; }
.sq { width: 11px; height: 11px; margin-left: 3px; }
.ctext { font: 10.5px/14px "Liberation Mono", monospace; color: #111; position: relative; top: 1px; }
.zero { margin-left: 9px; font-size: 11px; }
.bl1 { margin-left: 9px; }
.bl2 { margin-left: 9px; }
.ltype { width: 60px; height: 1px; background: #000; }
.dn { width: 9px; height: 6px; position: absolute; right: 6px; top: 7px; }
.brushb { width: 23px; display: flex; justify-content: center; flex: none; margin-left: 1px; }

.work { display: flex; height: 667px; }
.leftside { width: 759px; flex: none; }
.mid { display: flex; height: 608px; }
.vwrap { flex: none; }
.lwrap { width: 28px; border-right: 2px solid #a0a0a0; }
.vtb { width: 27px; flex: none; display: flex; flex-direction: column; }
.ltb { width: 26px; border-bottom: 1px solid #a0a0a0; padding-bottom: 1px; }
.hgrip { height: 3px; margin: 3px 2px 4px; border-top: 1px solid #a8a8a8; border-bottom: 1px solid #fff; background: #e4e4e4; flex: none; }
.vb { height: 22px; flex: none; display: flex; align-items: center; justify-content: center; position: relative; left: 1px; }
.rtb { border-right: 1px solid #a0a0a0; border-left: 1px solid #fff; align-self: flex-start; border-bottom: 1px solid #a0a0a0; }
.rtb .vb { left: 0; }
.vs { height: 6px; flex: none; display: flex; align-items: center; }
.vs::before { content: ""; flex: 1; height: 1px; margin: 0 2px; background: #a8a8a8; }
.bigA { font: 22px/22px "Liberation Sans", sans-serif; color: #1a1a1a; }
.bars { width: 4px; height: 15px; border-left: 1px solid #111; border-right: 1px solid #111; margin-right: 1px; }

.canvascol { width: 702px; flex: none; display: flex; flex-direction: column; }
.canvas { flex: 1; background: #000; position: relative; overflow: hidden; border-top: 1px solid #666; }

.wm { position: absolute; left: 0; top: 276px; color: #4a55a2; white-space: nowrap; display: flex; align-items: center; height: 24px; font: 22px/24px "Liberation Mono", monospace; }
.wa { flex: none; font-size: 18px; }
.wa1 { width: 15px; position: relative; top: -1px; }
.wa2 { width: 10px; position: relative; top: -1px; }
.wc { flex: none; font: 18px/24px "Noto Sans CJK SC", sans-serif; width: 72px; position: relative; top: -3px; }
.wq { flex: none; margin-left: 16px; width: 106px; overflow: hidden; letter-spacing: -.9px; word-spacing: -6px; }
.wu { flex: none; margin-left: 143px; letter-spacing: .1px; }

.chv { position: absolute; left: 218px; top: 99px; width: 1px; height: 30px; background: #fff; }
.chh { position: absolute; left: 188px; top: 129px; width: 30px; height: 1px; background: #fff; }
.chb { position: absolute; left: 216px; top: 127px; width: 5px; height: 5px; border: 1px solid #fff; }

.ctx { position: absolute; left: 218px; top: 129px; width: 141px; height: 413px; background: #f0f0f0; border: 1px solid #a0a0a0; border-right-width: 2px; border-bottom-width: 2px; padding: 2px 0; }
.ci { height: 23px; display: flex; align-items: center; padding-left: 4px; color: #111; }
.ci span { margin-left: 7px; white-space: nowrap; }
.cs { height: 8px; display: flex; align-items: center; padding: 0 13px 0 13px; }
.cs::before { content: ""; flex: 1; height: 1px; background: #a8a8a8; }

.tabbar { height: 19px; flex: none; display: flex; align-items: center; border-top: 1px solid #8a8a8a; border-bottom: 1px solid #fff; background: #f0f0f0; margin-bottom: 2px; }
.tabbtn { width: 16px; height: 17px; display: flex; align-items: center; justify-content: center; flex: none; border-right: 1px solid #bbb; }
.tri { width: 6px; height: 9px; }
.tab { width: 47px; flex: none; display: flex; height: 17px; align-items: stretch; }
.slash { width: 7px; height: 16px; flex: none; }
.tabt { width: 33px; flex: none; text-align: center; line-height: 14px; height: 16px; border-bottom: 1px solid #222; }
.hsc { margin-left: 346px; flex: 1; display: flex; align-items: center; height: 17px; padding-right: 20px; border-left: 1px solid #ddd; }
.ch { width: 6px; height: 9px; flex: none; margin: 0 6px; }
.thumb { width: 17px; height: 17px; background: #cdcdcd; flex: none; }
.grow { flex: 1; }

.cmd { width: 755px; margin-top: 2px; }
.log { display: flex; height: 34px; background: #fff; border-top: 2px solid #666; border-bottom: 1px solid #a0a0a0; }
.logtext { flex: 1; padding-left: 12px; margin-top: -3px; font: 13px/17px "Noto Sans CJK SC", sans-serif; color: #222; }
.ll { height: 17px; line-height: 17px; white-space: nowrap; }
.mono { font: 13px/17px "Liberation Mono", monospace; letter-spacing: -.8px; color: #222; }
.vsc { width: 16px; background: #f0f0f0; display: flex; flex-direction: column; align-items: center; gap: 9px; padding-top: 6px; }
.chv2 { width: 9px; height: 6px; flex: none; }
.input { display: flex; height: 19px; background: #fff; align-items: center; border-bottom: 1px solid #e8e8e8; }
.prompt { margin-left: 4px; margin-top: -1px; font: 13px/16px "Noto Sans CJK SC", sans-serif; color: #111; width: 660px; flex: none; }
.hsc2 { margin-left: 3px; width: 71px; height: 18px; background: #f0f0f0; display: flex; align-items: center; }
.thumb2 { width: 17px; height: 18px; background: #cdcdcd; flex: none; }

.panel { flex: 1; margin-left: 1px; background: #f0f0f0; border-left: 2px solid #777; border-bottom: 2px solid #777; border-right: 1px solid #a0a0a0; display: flex; flex-direction: column; padding-left: 1px; }
.ptitle { height: 26px; flex: none; display: flex; align-items: center; padding: 2px 0 0 5px; }
.pline { width: 124px; height: 1px; background: #909090; }
.pclose { margin-left: 9px; font: bold 12px/12px "Liberation Sans", sans-serif; color: #c05a10; }
.pselect { width: 125px; height: 21px; margin-left: 5px; background: #e1e1e1; border: 1px solid #a0a0a0; position: relative; padding-left: 2px; line-height: 19px; flex: none; color: #111; }
.pgroup { height: 20px; display: flex; align-items: center; flex: none; padding-left: 5px; }
.minus { width: 9px; height: 9px; border: 1px solid #222; position: relative; flex: none; display: flex; align-items: center; justify-content: center; }
.minus::before { content: ""; width: 5px; height: 1px; background: #222; }
.gname { margin-left: 9px; font-weight: bold; font-size: 13px; color: #777; }
.ptable { flex: none; margin-left: 19px; margin-right: 1px; }
.pr { display: flex; height: 19px; background: #fff; align-items: center; }
.pk { width: 57px; flex: none; padding-left: 4px; border-right: 1px solid #f0f0f0; font-size: 13px; line-height: 15px; height: 19px; color: #222; }
.pv { padding-left: 4px; font-size: 11.5px; line-height: 16px; margin-top: -4px; color: #222; white-space: nowrap; }
.cj { font-size: 12.5px; }
.pempty { flex: 1; background: #fff; margin-right: 1px; display: flex; }
.pcol { width: 1px; margin-left: 75px; background: #f0f0f0; }
.pdesc { height: 62px; flex: none; margin: 4px 2px 2px 1px; border: 1px solid #a0a0a0; background: #efefef; }

.status { height: 17px; display: flex; align-items: center; border-top: 1px solid #a0a0a0; color: #111; }
.coords { width: 496px; padding-left: 3px; white-space: nowrap; flex: none; font-size: 12.3px; word-spacing: 1px; }
.st { flex: none; white-space: nowrap; }
.s1 { margin-left: 3px; }
.s2 { margin-left: 12px; }
.s3 { margin-left: 12px; }
.on { border: 1px solid #ccc; border-bottom: 0; padding: 0 1px; height: 16px; margin-left: 8px; width: 58px; }
.on + .on { margin-left: 3px; }
.s4 { margin-left: 6px; font-size: 12.5px; }
.s5 { margin-left: 12px; }
.logo { margin-left: 10px; width: 115px; height: 16px; background: #fff; display: flex; align-items: center; padding-left: 2px; }
.lg { width: 18px; height: 16px; flex: none; }
.lt { margin-left: 5px; font: 11px/16px "Liberation Serif", serif; white-space: nowrap; }
.lb { color: #34458c; }
.lg2 { color: #666; }
```
